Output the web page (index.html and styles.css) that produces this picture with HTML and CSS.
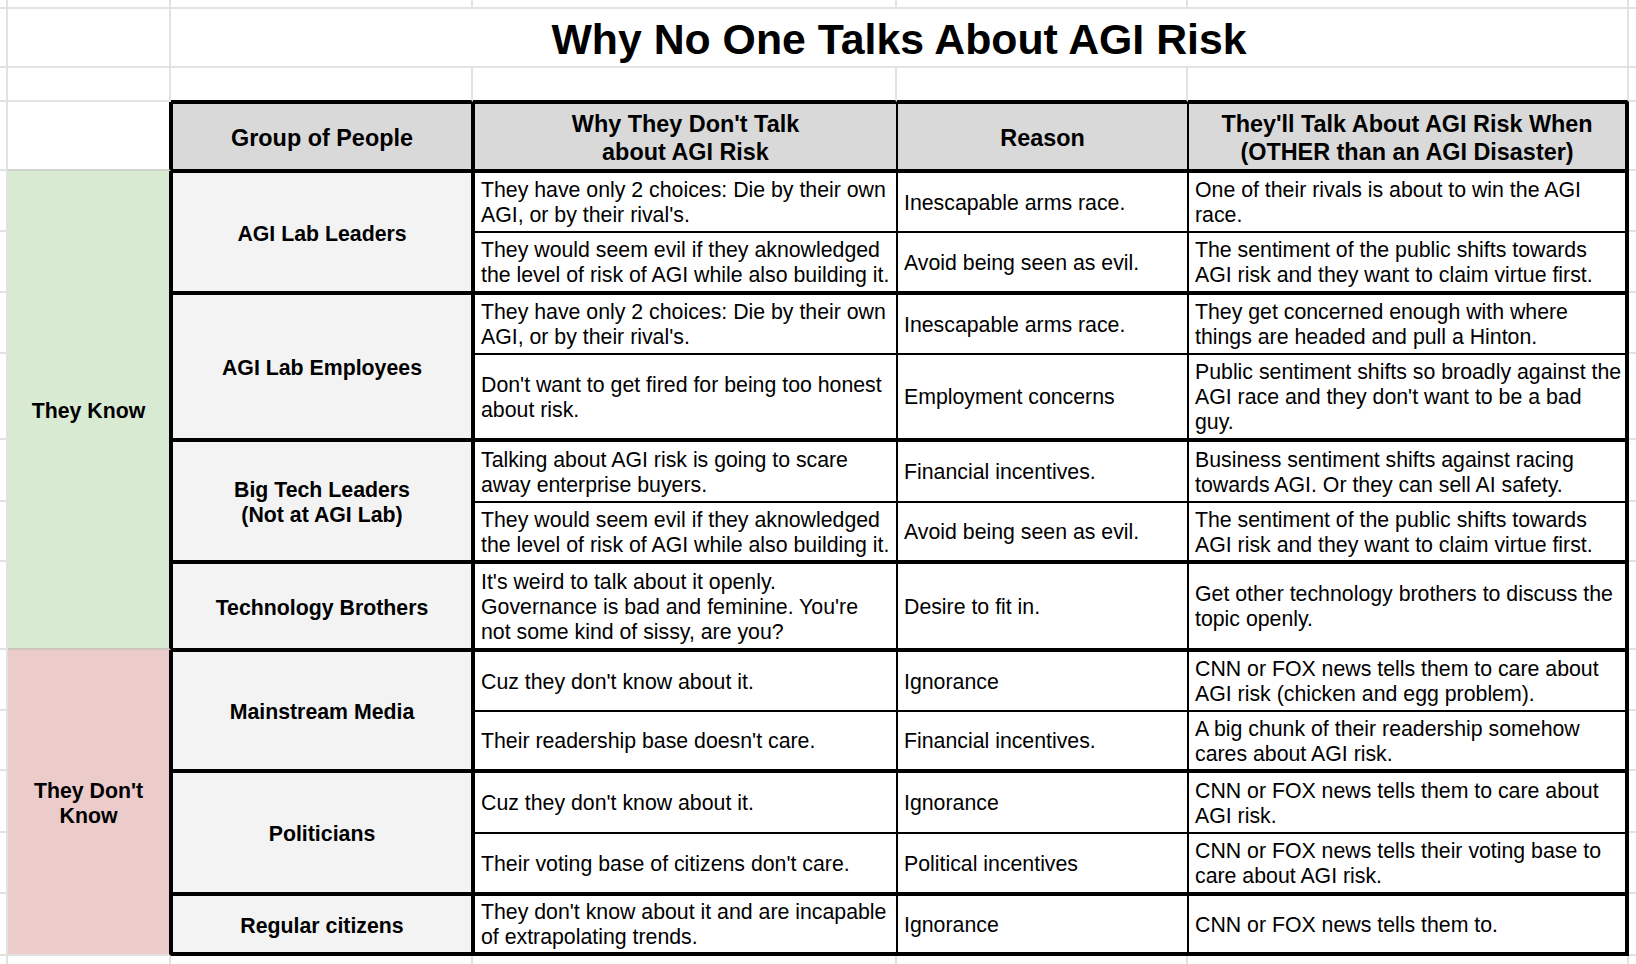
FILE: index.html
```html
<!DOCTYPE html>
<html lang="en">
<head>
<meta charset="utf-8">
<title>Why No One Talks About AGI Risk</title>
<link rel="stylesheet" href="styles.css">
</head>
<body>
<div class="sheet">
  <!-- row 0 -->
  <div class="g"></div><div class="g"></div><div class="g"></div><div class="g"></div><div class="g"></div><div class="g"></div><div class="g nr"></div>
  <!-- title row -->
  <div class="g"></div><div class="g"></div>
  <div class="title">Why No One Talks About AGI Risk</div>
  <div class="g nr"></div>
  <!-- spacer row -->
  <div class="g"></div><div class="g"></div><div class="g edge"></div><div class="g edge"></div><div class="g edge"></div><div class="g edge"></div><div class="g nr"></div>
  <!-- header row -->
  <div class="g"></div>
  <div class="corner"></div>
  <div class="hd col-b"><span>Group of People</span></div>
  <div class="hd col-c"><span>Why They Don't Talk<br>about AGI Risk</span></div>
  <div class="hd col-d"><span>Reason</span></div>
  <div class="hd col-e"><span>They'll Talk About AGI Risk When<br>(OTHER than an AGI Disaster)</span></div>
  <div class="g nr"></div>

  <!-- AGI Lab Leaders -->
  <div class="g"></div>
  <div class="side know"><span>They Know</span></div>
  <div class="grp span2"><span>AGI Lab Leaders</span></div>
  <div class="dc col-c gtop"><span>They have only 2 choices: Die by their own<br>AGI, or by their rival's.</span></div>
  <div class="dc col-d gtop"><span>Inescapable arms race.</span></div>
  <div class="dc col-e gtop"><span>One of their rivals is about to win the AGI<br>race.</span></div>
  <div class="g nr"></div>

  <div class="g"></div>
  <div class="dc col-c gend"><span>They would seem evil if they aknowledged<br>the level of risk of AGI while also building it.</span></div>
  <div class="dc col-d gend"><span>Avoid being seen as evil.</span></div>
  <div class="dc col-e gend"><span>The sentiment of the public shifts towards<br>AGI risk and they want to claim virtue first.</span></div>
  <div class="g nr"></div>

  <!-- AGI Lab Employees -->
  <div class="g"></div>
  <div class="grp span2"><span>AGI Lab Employees</span></div>
  <div class="dc col-c gtop"><span>They have only 2 choices: Die by their own<br>AGI, or by their rival's.</span></div>
  <div class="dc col-d gtop"><span>Inescapable arms race.</span></div>
  <div class="dc col-e gtop"><span>They get concerned enough with where<br>things are headed and pull a Hinton.</span></div>
  <div class="g nr"></div>

  <div class="g"></div>
  <div class="dc col-c gend"><span>Don't want to get fired for being too honest<br>about risk.</span></div>
  <div class="dc col-d gend"><span>Employment concerns</span></div>
  <div class="dc col-e gend"><span>Public sentiment shifts so broadly against the<br>AGI race and they don't want to be a bad<br>guy.</span></div>
  <div class="g nr"></div>

  <!-- Big Tech Leaders -->
  <div class="g"></div>
  <div class="grp span2"><span>Big Tech Leaders<br>(Not at AGI Lab)</span></div>
  <div class="dc col-c gtop"><span>Talking about AGI risk is going to scare<br>away enterprise buyers.</span></div>
  <div class="dc col-d gtop"><span>Financial incentives.</span></div>
  <div class="dc col-e gtop"><span>Business sentiment shifts against racing<br>towards AGI. Or they can sell AI safety.</span></div>
  <div class="g nr"></div>

  <div class="g"></div>
  <div class="dc col-c gend"><span>They would seem evil if they aknowledged<br>the level of risk of AGI while also building it.</span></div>
  <div class="dc col-d gend"><span>Avoid being seen as evil.</span></div>
  <div class="dc col-e gend"><span>The sentiment of the public shifts towards<br>AGI risk and they want to claim virtue first.</span></div>
  <div class="g nr"></div>

  <!-- Technology Brothers -->
  <div class="g"></div>
  <div class="grp"><span>Technology Brothers</span></div>
  <div class="dc col-c gtop gend"><span>It's weird to talk about it openly.<br>Governance is bad and feminine. You're<br>not some kind of sissy, are you?</span></div>
  <div class="dc col-d gtop gend"><span>Desire to fit in.</span></div>
  <div class="dc col-e gtop gend"><span>Get other technology brothers to discuss the<br>topic openly.</span></div>
  <div class="g nr"></div>

  <!-- Mainstream Media -->
  <div class="g"></div>
  <div class="side dont"><span>They Don't<br>Know</span></div>
  <div class="grp span2"><span>Mainstream Media</span></div>
  <div class="dc col-c gtop"><span>Cuz they don't know about it.</span></div>
  <div class="dc col-d gtop"><span>Ignorance</span></div>
  <div class="dc col-e gtop"><span>CNN or FOX news tells them to care about<br>AGI risk (chicken and egg problem).</span></div>
  <div class="g nr"></div>

  <div class="g"></div>
  <div class="dc col-c gend"><span>Their readership base doesn't care.</span></div>
  <div class="dc col-d gend"><span>Financial incentives.</span></div>
  <div class="dc col-e gend"><span>A big chunk of their readership somehow<br>cares about AGI risk.</span></div>
  <div class="g nr"></div>

  <!-- Politicians -->
  <div class="g"></div>
  <div class="grp span2"><span>Politicians</span></div>
  <div class="dc col-c gtop"><span>Cuz they don't know about it.</span></div>
  <div class="dc col-d gtop"><span>Ignorance</span></div>
  <div class="dc col-e gtop"><span>CNN or FOX news tells them to care about<br>AGI risk.</span></div>
  <div class="g nr"></div>

  <div class="g"></div>
  <div class="dc col-c gend"><span>Their voting base of citizens don't care.</span></div>
  <div class="dc col-d gend"><span>Political incentives</span></div>
  <div class="dc col-e gend"><span>CNN or FOX news tells their voting base to<br>care about AGI risk.</span></div>
  <div class="g nr"></div>

  <!-- Regular citizens -->
  <div class="g"></div>
  <div class="grp tend"><span>Regular citizens</span></div>
  <div class="dc col-c gtop tend"><span>They don't know about it and are incapable<br>of extrapolating trends.</span></div>
  <div class="dc col-d gtop tend"><span>Ignorance</span></div>
  <div class="dc col-e gtop tend"><span>CNN or FOX news tells them to.</span></div>
  <div class="g nr"></div>

  <!-- bottom sliver -->
  <div class="g nb"></div><div class="g nb"></div><div class="g nb"></div><div class="g nb"></div><div class="g nb"></div><div class="g nb"></div><div class="g nb nr"></div>
</div>
</body>
</html>
```
FILE: styles.css
```css
* {
  box-sizing: border-box;
}

html,
body {
  margin: 0;
  padding: 0;
  background: #ffffff;
}

body {
  font-family: "Liberation Sans", Arial, sans-serif;
  color: #000000;
}

.sheet {
  display: grid;
  grid-template-columns: 8px 163px 302px 424px 291px 441px 7px;
  grid-template-rows: 9px 59px 34px 69px 61px 61px 61px 86px 62px 60px 88px 61px 60px 62px 61px 62px 8px;
  width: 1636px;
  height: 964px;
  overflow: hidden;
}

/* plain spreadsheet cells */
.g {
  border-right: 2px solid #e2e2e2;
  border-bottom: 2px solid #e2e2e2;
}

.g.edge {
  border-bottom-color: #000000;
}

.g.nr {
  border-right: 0;
}

.g.nb {
  border-bottom: 0;
}

.title {
  grid-column: span 4;
  display: flex;
  align-items: center;
  justify-content: center;
  padding-top: 4px;
  font-size: 42.8px;
  font-weight: 700;
  border-right: 2px solid #e2e2e2;
  border-bottom: 2px solid #e2e2e2;
}

.corner {
  border-right: 2px solid #000000;
  border-bottom: 2px solid #cfd6cb;
}

/* left category column */
.side {
  grid-row: span 7;
  display: flex;
  align-items: center;
  justify-content: center;
  text-align: center;
  padding-top: 4px;
  font-size: 21.3px;
  line-height: 25px;
  font-weight: 700;
  background: #d9ead3;
  border-right: 2px solid #000000;
  border-bottom: 2px solid #cdc6c0;
}

.side.dont {
  grid-row: span 5;
  background: #eccbcb;
  border-bottom: 2px solid #e2e2e2;
}

/* header */
.hd {
  display: flex;
  align-items: center;
  justify-content: center;
  text-align: center;
  padding-top: 2px;
  font-size: 23.4px;
  line-height: 28px;
  font-weight: 700;
  background: #d9d9d9;
  border: solid #000000;
  border-width: 2px 1px;
  white-space: nowrap;
}

/* group names */
.grp {
  display: flex;
  align-items: center;
  justify-content: center;
  text-align: center;
  padding-top: 4px;
  font-size: 21.3px;
  line-height: 25px;
  font-weight: 700;
  background: #f3f3f3;
  border: 2px solid #000000;
}

.span2 {
  grid-row: span 2;
}

/* data cells */
.dc {
  display: flex;
  align-items: center;
  padding: 2px 4px 0 6px;
  font-size: 21.3px;
  line-height: 25px;
  background: #ffffff;
  border: 1px solid #000000;
  white-space: nowrap;
  overflow: hidden;
}

.col-b {
  border-left-width: 2px;
  border-right-width: 2px;
}

.col-c {
  border-left-width: 2px;
  border-right-width: 1px;
}

.col-d {
  border-left-width: 1px;
  border-right-width: 1px;
}

.col-e {
  border-left-width: 1px;
  border-right-width: 4px;
}

.gtop {
  border-top-width: 2px;
}

.gend {
  border-bottom-width: 2px;
}

.tend {
  border-bottom-width: 4px;
}
```
